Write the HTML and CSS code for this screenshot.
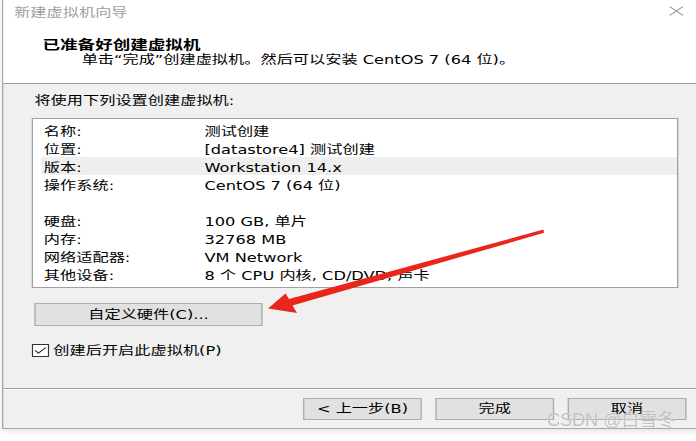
FILE: index.html
```html
<!DOCTYPE html>
<html lang="zh-CN">
<head>
<meta charset="utf-8">
<title>新建虚拟机向导</title>
<link rel="stylesheet" href="styles.css">
</head>
<body>
<div class="stage">
  <div class="window">
    <div class="titlebar">
      <span class="title">新建虚拟机向导</span>
      <svg class="close" width="11" height="10" viewBox="0 0 11 10"><path d="M0.5 0.5 L10.5 9.5 M10.5 0.5 L0.5 9.5" stroke="#8c8c8c" stroke-width="1" fill="none"/></svg>
    </div>
    <div class="header">
      <div class="heading">已准备好创建虚拟机</div>
      <div class="subtitle">单击“完成”创建虚拟机。然后可以安装 CentOS 7 (64 位)。</div>
    </div>
    <div class="main">
      <div class="intro">将使用下列设置创建虚拟机:</div>
      <div class="list">
        <div class="row"><span>名称:</span><span>测试创建</span></div>
        <div class="row"><span>位置:</span><span>[datastore4] 测试创建</span></div>
        <div class="row selected"><span>版本:</span><span>Workstation 14.x</span></div>
        <div class="row"><span>操作系统:</span><span>CentOS 7 (64 位)</span></div>
        <div class="row"><span></span><span></span></div>
        <div class="row"><span>硬盘:</span><span>100 GB, 单片</span></div>
        <div class="row"><span>内存:</span><span>32768 MB</span></div>
        <div class="row"><span>网络适配器:</span><span>VM Network</span></div>
        <div class="row"><span>其他设备:</span><span>8 个 CPU 内核, CD/DVD, 声卡</span></div>
      </div>
      <div class="btn custom">自定义硬件(C)...</div>
      <div class="check">
        <svg class="box" width="13" height="13" viewBox="0 0 13 13"><rect x="0.5" y="0.5" width="12" height="12" fill="#fff" stroke="#333" stroke-width="1"/><path d="M2.5 6.5 L5 9 L10.5 3.5" stroke="#222" stroke-width="1" fill="none"/></svg>
        <span>创建后开启此虚拟机(P)</span>
      </div>
    </div>
    <div class="footer">
      <div class="btn">&lt; 上一步(B)</div>
      <div class="btn">完成</div>
      <div class="btn">取消</div>
    </div>
  </div>
  <svg class="arrow" width="696" height="441" viewBox="0 0 696 441"><polygon points="543.5,229.6 289,299 285.5,293.5 268,308.5 297,313 292.5,305.5 544,232.8" fill="#e8261c"/></svg>
  <div class="watermark">CSDN @白雪冬</div>
</div>
</body>
</html>
```
FILE: styles.css
```css
html, body {
  margin: 0;
  padding: 0;
  background: #fff;
}
.stage {
  position: relative;
  width: 696px;
  height: 441px;
  overflow: hidden;
  background: #fff;
}
.window {
  width: 522px;
  margin-left: 2.2px;
  transform: scaleX(1.35);
  transform-origin: 0 0;
  background: #f0f0f0;
  border-left: 1px solid #a8a8a8;
  border-bottom: 1px solid #a8a8a8;
  box-shadow: 0 2px 5px rgba(0,0,0,0.12);
  font-family: "DejaVu Sans", "Noto Sans CJK SC", sans-serif;
  font-size: 12px;
  color: #000;
}
.titlebar {
  height: 24px;
  background: #fff;
  display: flex;
  align-items: center;
  justify-content: space-between;
  padding: 0 18px 0 8px;
}
.title {
  font-family: "Noto Sans CJK SC", sans-serif;
  color: #a0a0a0;
  font-size: 12px;
  line-height: 24px;
}
.close {
  display: block;
  margin-top: -2px;
}
.header {
  background: #fff;
  padding: 12px 0 15px 29px;
  border-bottom: 1px solid #a0a0a0;
}
.heading {
  font-family: "Noto Sans CJK SC", sans-serif;
  font-weight: bold;
  font-size: 13px;
  line-height: 16px;
}
.subtitle {
  margin-left: 29px;
  line-height: 16px;
}
.main {
  padding: 9px 0 31px 21px;
  border-bottom: 1px solid #a0a0a0;
}
.intro {
  padding-left: 2px;
  line-height: 16px;
}
.list {
  box-sizing: border-box;
  margin-top: 9px;
  width: 479px;
  height: 170px;
  background: #fff;
  border: 1px solid #a0a0a0;
  padding: 2px 0 0 6px;
}
.row {
  display: grid;
  grid-template-columns: 119px 1fr;
  box-sizing: border-box;
  height: 18px;
  padding: 3px 0 0 2px;
  line-height: 16px;
  white-space: nowrap;
}
.row.selected {
  background: #efefef;
}
.btn {
  box-sizing: border-box;
  width: 88px;
  height: 22px;
  background: #e1e1e1;
  border: 1px solid #adadad;
  display: flex;
  align-items: center;
  justify-content: center;
  line-height: 16px;
  white-space: nowrap;
}
.btn.custom {
  margin-top: 15px;
  margin-left: 2px;
  width: 169px;
  height: 23px;
}
.check {
  margin-top: 18px;
  height: 13px;
  display: flex;
  align-items: center;
  gap: 3px;
  line-height: 16px;
}
.box {
  display: block;
  flex: none;
}
.footer {
  border-top: 1px solid #fff;
  padding: 8px 16px 8px 0;
  display: flex;
  justify-content: flex-end;
  gap: 10px;
}
.arrow {
  position: absolute;
  left: 0;
  top: 0;
  pointer-events: none;
}
.watermark {
  position: absolute;
  left: 547px;
  top: 410px;
  font-family: "Liberation Sans", "Noto Sans CJK SC", sans-serif;
  font-size: 18px;
  line-height: 20px;
  color: rgba(185,185,185,0.9);
  text-shadow: 0 0 1px rgba(255,255,255,0.9);
  white-space: nowrap;
}
```
